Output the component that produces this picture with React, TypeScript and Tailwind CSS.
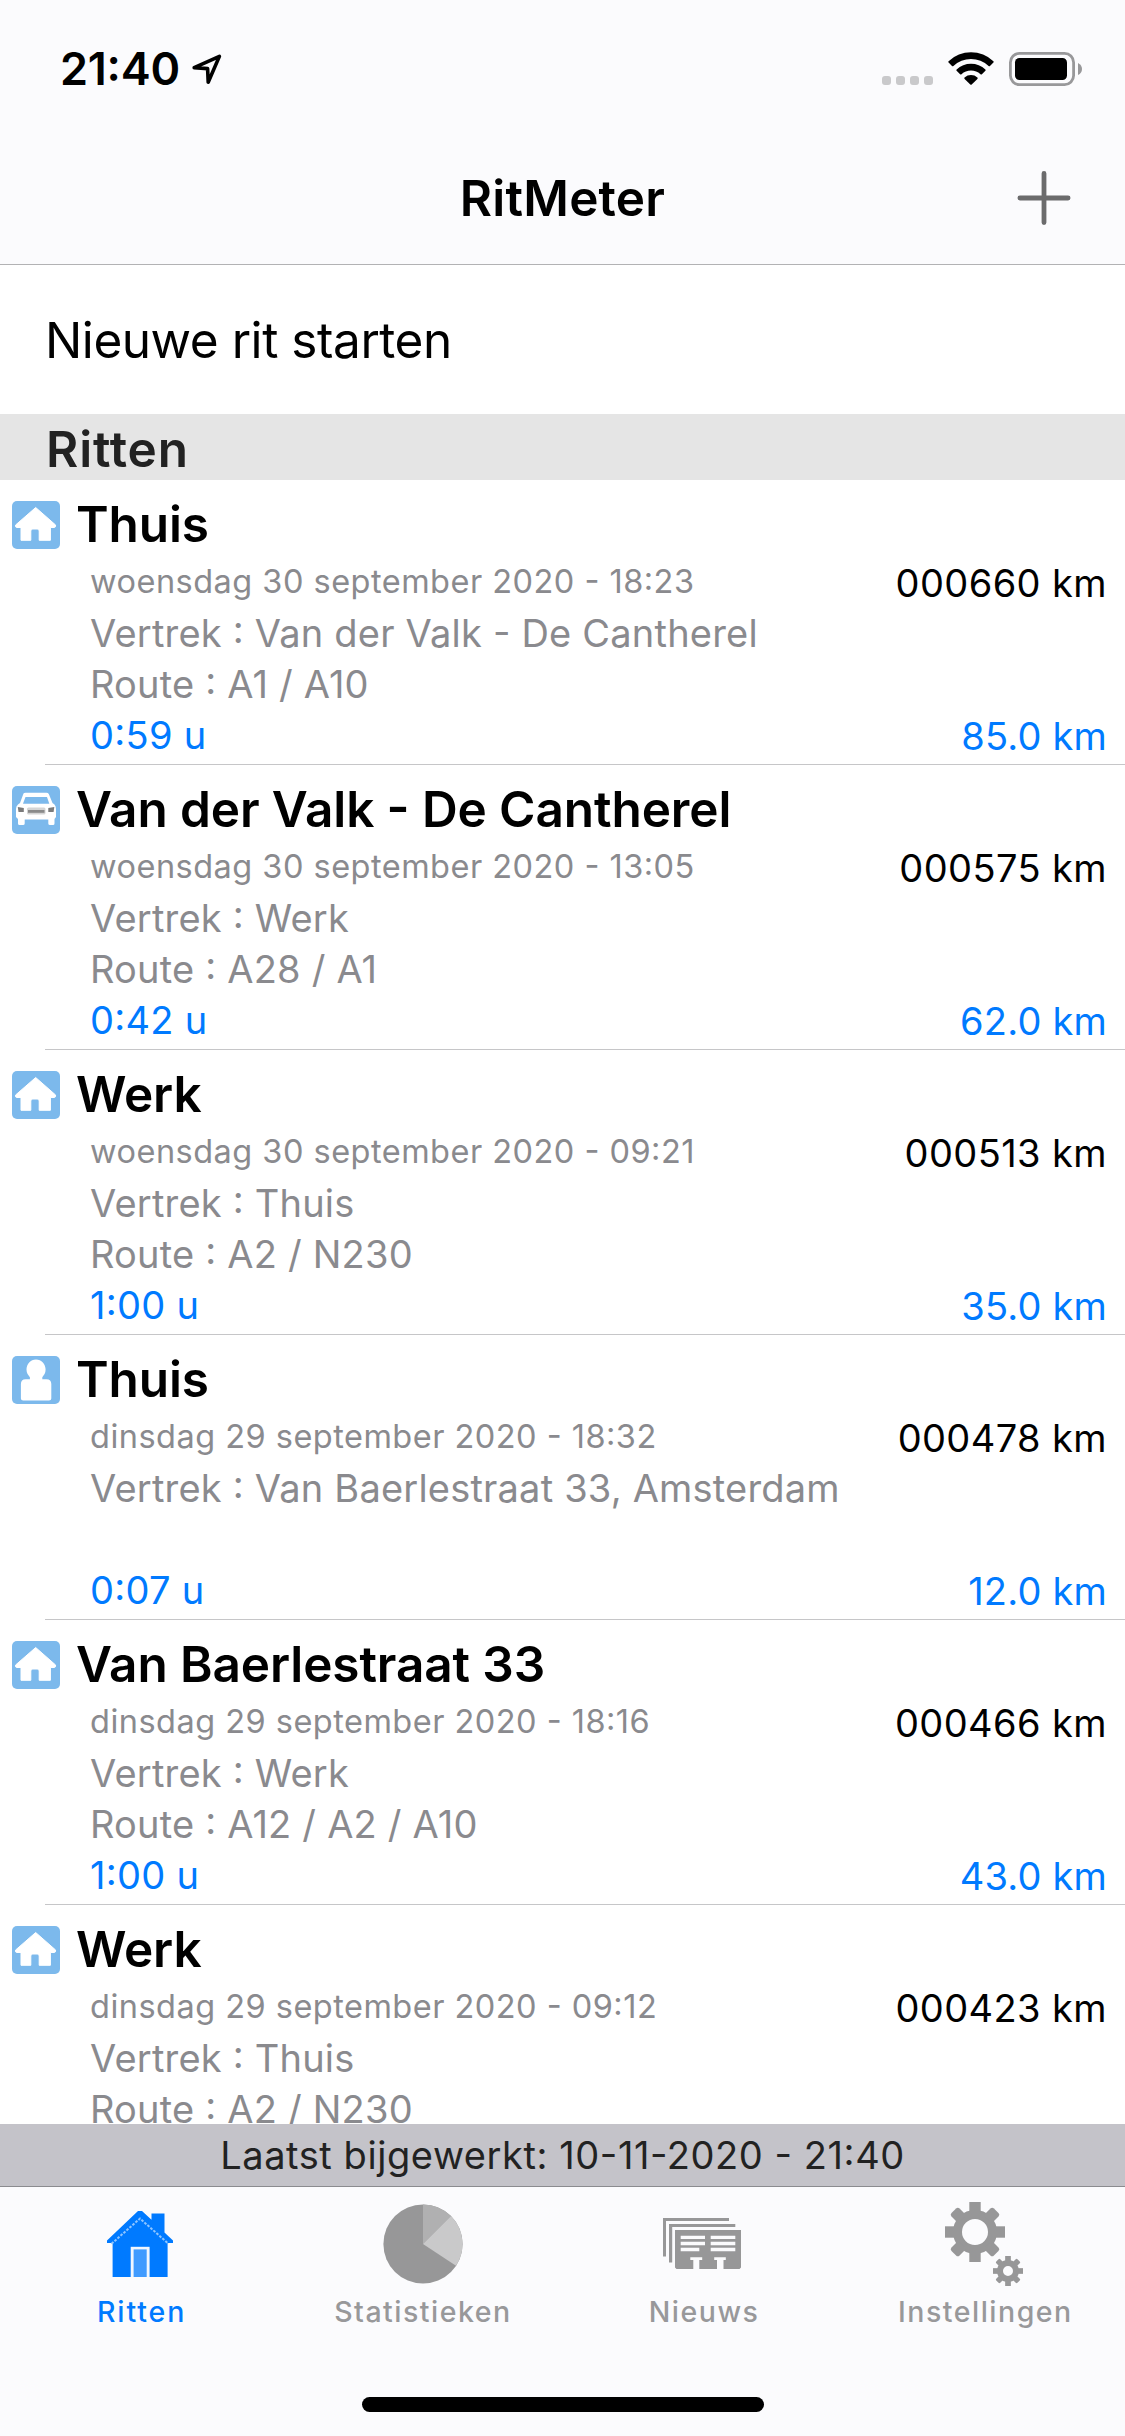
import type { ReactNode } from 'react';

type TripKind = 'home' | 'car' | 'person';

interface Trip {
  kind: TripKind;
  title: string;
  date: string;
  from: string;
  route?: string;
  duration?: string;
  odometer: string;
  distance?: string;
}

const trips: Trip[] = [
  { kind: 'home', title: 'Thuis', date: 'woensdag 30 september 2020 - 18:23', from: 'Van der Valk - De Cantherel', route: 'A1 / A10', duration: '0:59 u', odometer: '000660 km', distance: '85.0 km' },
  { kind: 'car', title: 'Van der Valk - De Cantherel', date: 'woensdag 30 september 2020 - 13:05', from: 'Werk', route: 'A28 / A1', duration: '0:42 u', odometer: '000575 km', distance: '62.0 km' },
  { kind: 'home', title: 'Werk', date: 'woensdag 30 september 2020 - 09:21', from: 'Thuis', route: 'A2 / N230', duration: '1:00 u', odometer: '000513 km', distance: '35.0 km' },
  { kind: 'person', title: 'Thuis', date: 'dinsdag 29 september 2020 - 18:32', from: 'Van Baerlestraat 33, Amsterdam', duration: '0:07 u', odometer: '000478 km', distance: '12.0 km' },
  { kind: 'home', title: 'Van Baerlestraat 33', date: 'dinsdag 29 september 2020 - 18:16', from: 'Werk', route: 'A12 / A2 / A10', duration: '1:00 u', odometer: '000466 km', distance: '43.0 km' },
  { kind: 'home', title: 'Werk', date: 'dinsdag 29 september 2020 - 09:12', from: 'Thuis', route: 'A2 / N230', odometer: '000423 km' },
];

function TripIcon({ kind }: { kind: TripKind }) {
  return (
    <svg viewBox="0 0 48 48" className="h-12 w-12 shrink-0">
      <rect width="48" height="48" rx="5" fill="#7cb9ec" />
      {kind === 'home' && (
        <path
          d="M23.7 6.5 L43.6 24 Q44 26.5 42 26.5 H38.4 V39.3 H27.2 V30 Q27.2 28 25.2 28 H20.8 Q18.8 28 18.8 30 V39.3 H9 V26.5 H5 Q3 26.5 3.6 24 Z"
          fill="#fff"
          stroke="#fff"
          strokeLinejoin="round"
        />
      )}
      {kind === 'car' && (
        <>
          <path d="M11.5 7.5 Q12 6.8 13.5 6.8 H34.5 Q36 6.8 36.8 8 L40.5 17 L42.5 18.5 Q44 20 44 23 V31 L42.5 33 V37.5 Q42.5 39 41 39 H38 Q36.3 39 36.3 37.5 V33.5 H12.7 V37.5 Q12.7 39 11 39 H7.5 Q6 39 6 37.5 V33 L4 31 V23 Q4 20 6 18.5 L8 17 Z" fill="#fff" />
          <path d="M13.5 11 H35 L37.3 17.8 H11 Z" fill="#7cb9ec" />
          <rect x="15" y="21.5" width="18.5" height="7" rx="1.5" fill="#d5d5d5" />
          <rect x="16" y="24" width="16.5" height="2.8" fill="#8a8a8a" />
          <path d="M5.8 21 L11.8 22 V26 H6.5 Z M42.3 21 L36.3 22 V26 H41.6 Z" fill="#7b7b7b" />
        </>
      )}
      {kind === 'person' && (
        <path d="M24 3.4 C29.5 3.4 33.6 8 33.6 13.6 C33.6 17.2 32 19.3 30.3 21.2 V23.2 H34.5 Q39.3 23.4 39.3 28 V42.5 Q39.3 44.6 37 44.6 H11.2 Q8.9 44.6 8.9 42.5 V28 Q8.9 23.4 13.6 23.2 H17.9 V21.2 C16.2 19.3 14.5 17.2 14.5 13.6 C14.5 8 18.5 3.4 24 3.4 Z" fill="#fff" />
      )}
    </svg>
  );
}

function TripRow({ trip }: { trip: Trip }) {
  return (
    <li className="flex h-[285px] shrink-0 flex-col">
      <div className="flex h-[284px] justify-between pl-3 pr-[18px]">
        <div className="flex">
          <div className="pt-[21px]">
            <TripIcon kind={trip.kind} />
          </div>
          <div className="pt-3.5 pl-4 text-[38px] leading-[51px] tracking-[0.2px] whitespace-nowrap text-[#8a8a8e]">
            <h3 className="text-[49.5px] leading-[60px] font-semibold tracking-[-0.1px] text-black">{trip.title}</h3>
            <div className="pl-3.5">
              <p className="h-[54px] text-[32.5px] leading-[56px] tracking-[0.48px]">{trip.date}</p>
              <p>Vertrek : {trip.from}</p>
              <p className="h-[51px]">{trip.route && `Route : ${trip.route}`}</p>
              <p className="tracking-[0.3px] text-[#007aff]">{trip.duration}</p>
            </div>
          </div>
        </div>
        <div className="flex flex-col gap-[102px] pt-[78px] text-right text-[38px] leading-[51px] tracking-[0.4px] whitespace-nowrap">
          <p className="text-black">{trip.odometer}</p>
          <p className="tracking-[0.2px] text-[#007aff]">{trip.distance}</p>
        </div>
      </div>
      <div className="ml-[45px] h-px bg-[#c6c6c8]" />
    </li>
  );
}

function StatusBar() {
  return (
    <div className="flex h-[132px] justify-between pr-[43px] pl-[60px]">
      <div className="flex items-start pt-[43.5px]">
        <span className="text-[45px] leading-[50px] font-semibold tracking-[-0.25px]">21:40</span>
        <svg viewBox="0 0 30 31" className="mt-[10px] ml-[12.5px] h-[31px] w-[30px]">
          <path d="M2.2 13.6 L27.4 2.4 L16.2 28.2 L15.6 14.6 Z" fill="none" stroke="#000" strokeWidth="3.6" strokeLinejoin="round" />
        </svg>
      </div>
      <div className="flex items-start pt-[52px]">
        <div className="mt-6 mr-[15px] flex gap-[5px]">
          {[0, 1, 2, 3].map((dot) => (
            <span key={dot} className="h-[9px] w-[9px] rounded-[3px] bg-[#c9c9cb]" />
          ))}
        </div>
        <svg viewBox="0 0 46 33" className="mr-[15px] h-[33px] w-[46px]">
          <path d="M0.6 9.2 A32.5 32.5 0 0 1 45.4 9.2 Q46 9.9 45.4 10.6 L42 13.9 Q41.3 14.5 40.6 13.9 A25.6 25.6 0 0 0 5.4 13.9 Q4.7 14.5 4 13.9 L0.6 10.6 Q0 9.9 0.6 9.2 Z" fill="#000" />
          <path d="M8.6 17.4 A21 21 0 0 1 37.4 17.4 Q38 18.1 37.4 18.8 L33.9 22.2 Q33.2 22.8 32.5 22.2 A14 14 0 0 0 13.5 22.2 Q12.8 22.8 12.1 22.2 L8.6 18.8 Q8 18.1 8.6 17.4 Z" fill="#000" />
          <path d="M16.6 25.5 A9.5 9.5 0 0 1 29.4 25.5 Q30 26.2 29.4 26.9 L23.7 32.5 Q23 33.1 22.3 32.5 L16.6 26.9 Q16 26.2 16.6 25.5 Z" fill="#000" />
        </svg>
        <svg viewBox="0 0 73 34" className="h-[34px] w-[73px]">
          <rect x="1.4" y="1.4" width="63.2" height="31.2" rx="9" fill="none" stroke="#98989a" strokeWidth="2.8" />
          <rect x="6" y="6" width="52" height="22" rx="4.5" fill="#000" />
          <path d="M69 11 Q73 13 73 17 Q73 21 69 23 Z" fill="#98989a" />
        </svg>
      </div>
    </div>
  );
}

function RittenIcon() {
  return (
    <svg viewBox="0 0 66 66" className="mt-6 mr-[2px] h-[66px] w-[66px]">
      <path d="M31 0 H35 L44.5 8.8 V2.6 H57.5 V21.5 L66 29.5 V32 H60.6 V66 H5.6 V32 H0 V29.5 Z" fill="#007aff" />
      <path d="M4.500 32.8 L33 7.5 L61.5 32.8" fill="none" stroke="#8fc5ff" strokeWidth="2" strokeDasharray="2.6 1.4" />
      <path d="M23.7 66 V35.8 H42.6 V66 Z" fill="#f1f7ff" />
      <path d="M26.6 66 V38.4 H39.7 V66 Z" fill="#409bff" />
    </svg>
  );
}

function StatistiekenIcon() {
  return (
    <svg viewBox="0 0 80 80" className="mt-[17px] ml-[2px] h-[80px] w-[80px]">
      <circle cx="40" cy="40" r="39.6" fill="#979798" />
      <path d="M40 40 V0.4 A39.6 39.6 0 0 1 68 12 Z" fill="#b0b0b1" />
      <path d="M40 40 L68 12 A39.6 39.6 0 0 1 73 61.8 Z" fill="#c9c9ca" />
    </svg>
  );
}

function NieuwsIcon() {
  return (
    <svg viewBox="0 0 78 51" className="mt-[31px] mr-[2px] h-[51px] w-[78px]">
      <path d="M0 0 H66 V3 H3 V38.5 H0 Z M6 6 H72.3 V9 H9.2 V44.5 H6 Z" fill="#979798" />
      <path d="M12 12 H78 V49.5 L76.5 51 H60.5 V42 H62.8 V39.2 H51.2 V42 H54 V51 H36.3 V42 H39.2 V39.2 H27.3 V42 H30.3 V51 H13.5 L12 49.5 Z" fill="#979798" />
      <path d="M17.7 17.7 H42 V21 H17.7 Z M17.7 23.8 H42 V27.2 H17.7 Z M17.7 29.8 H36.3 V33.2 H17.7 Z M47.7 17.7 H72.3 V21 H47.7 Z M47.7 23.8 H72.3 V27.2 H47.7 Z M47.7 29.8 H72.3 V33.2 H47.7 Z" fill="#fbfbfd" />
    </svg>
  );
}

function Gear({ cx, cy, scale }: { cx: number; cy: number; scale: number }) {
  return (
    <g transform={`translate(${cx} ${cy}) scale(${scale})`}>
      <circle r="17.5" fill="none" stroke="#979798" strokeWidth="9" />
      {[0, 45, 90, 135, 180, 225, 270, 315].map((angle) => (
        <rect key={angle} x="-5.7" y="-30" width="11.4" height="12" rx={angle % 90 ? 2.5 : 0} fill="#979798" transform={`rotate(${angle})`} />
      ))}
    </g>
  );
}

function InstellingenIcon() {
  return (
    <svg viewBox="0 0 78 84" className="mt-[15px] h-[84px] w-[78px]">
      <Gear cx={30} cy={30} scale={1} />
      <Gear cx={63} cy={69} scale={0.5} />
      <circle cx="63" cy="69" r="7" fill="none" stroke="#979798" strokeWidth="4" />
    </svg>
  );
}

function Tab({ label, active, children }: { label: string; active?: boolean; children: ReactNode }) {
  return (
    <div className="flex flex-1 flex-col items-center">
      <div className="flex h-[107px] items-start">{children}</div>
      <span className={`pl-[2px] text-[28.5px] leading-9 ${active ? 'font-medium tracking-[1.9px] text-[#007aff]' : 'font-[450] tracking-[1.5px] text-[#98989a]'}`}>{label}</span>
    </div>
  );
}

export default function App() {
  return (
    <div className="flex h-[2436px] w-[1125px] flex-col overflow-hidden bg-white font-['Inter',sans-serif] text-black [font-feature-settings:'calt'_1]">
      <header className="flex h-[265px] shrink-0 flex-col border-b border-[#b2b2b4] bg-[#fbfbfd]">
        <StatusBar />
        <div className="grid h-[132px] grid-cols-3 items-center">
          <span />
          <h1 className="text-center text-[49.5px] leading-[60px] font-semibold tracking-[0.21px]">RitMeter</h1>
          <svg viewBox="0 0 54 54" className="mr-[54px] h-[54px] w-[54px] justify-self-end">
            <path d="M27 2.4 V51.6 M2.9 27 H51.1" stroke="#6b6b6c" strokeWidth="4.8" strokeLinecap="round" />
          </svg>
        </div>
      </header>

      <div className="h-[149px] shrink-0 pl-[45px] text-[49.5px] leading-[150px] tracking-[-0.45px]">Nieuwe rit starten</div>
      <h2 className="h-[66px] shrink-0 bg-[#e5e5e5] pt-1 pl-[46px] text-[49.5px] leading-[62px] font-semibold tracking-[0.85px] text-[#222222]">Ritten</h2>

      <ul className="flex min-h-0 flex-1 flex-col overflow-hidden">
        {trips.map((trip, index) => (
          <TripRow key={index} trip={trip} />
        ))}
      </ul>

      <div className="h-[63px] shrink-0 border-b border-[#8b8b8f] bg-[#c4c3c9] text-center text-[38px] leading-[62px] tracking-[0.57px] text-[#222222]">
        Laatst bijgewerkt: 10-11-2020 - 21:40
      </div>

      <footer className="flex h-[249px] shrink-0 flex-col bg-[#fbfbfd]">
        <nav className="flex h-[210px]">
          <Tab label="Ritten" active>
            <RittenIcon />
          </Tab>
          <Tab label="Statistieken">
            <StatistiekenIcon />
          </Tab>
          <Tab label="Nieuws">
            <NieuwsIcon />
          </Tab>
          <Tab label="Instellingen">
            <InstellingenIcon />
          </Tab>
        </nav>
        <div className="mx-auto h-[15px] w-[402px] rounded-full bg-black" />
      </footer>
    </div>
  );
}
